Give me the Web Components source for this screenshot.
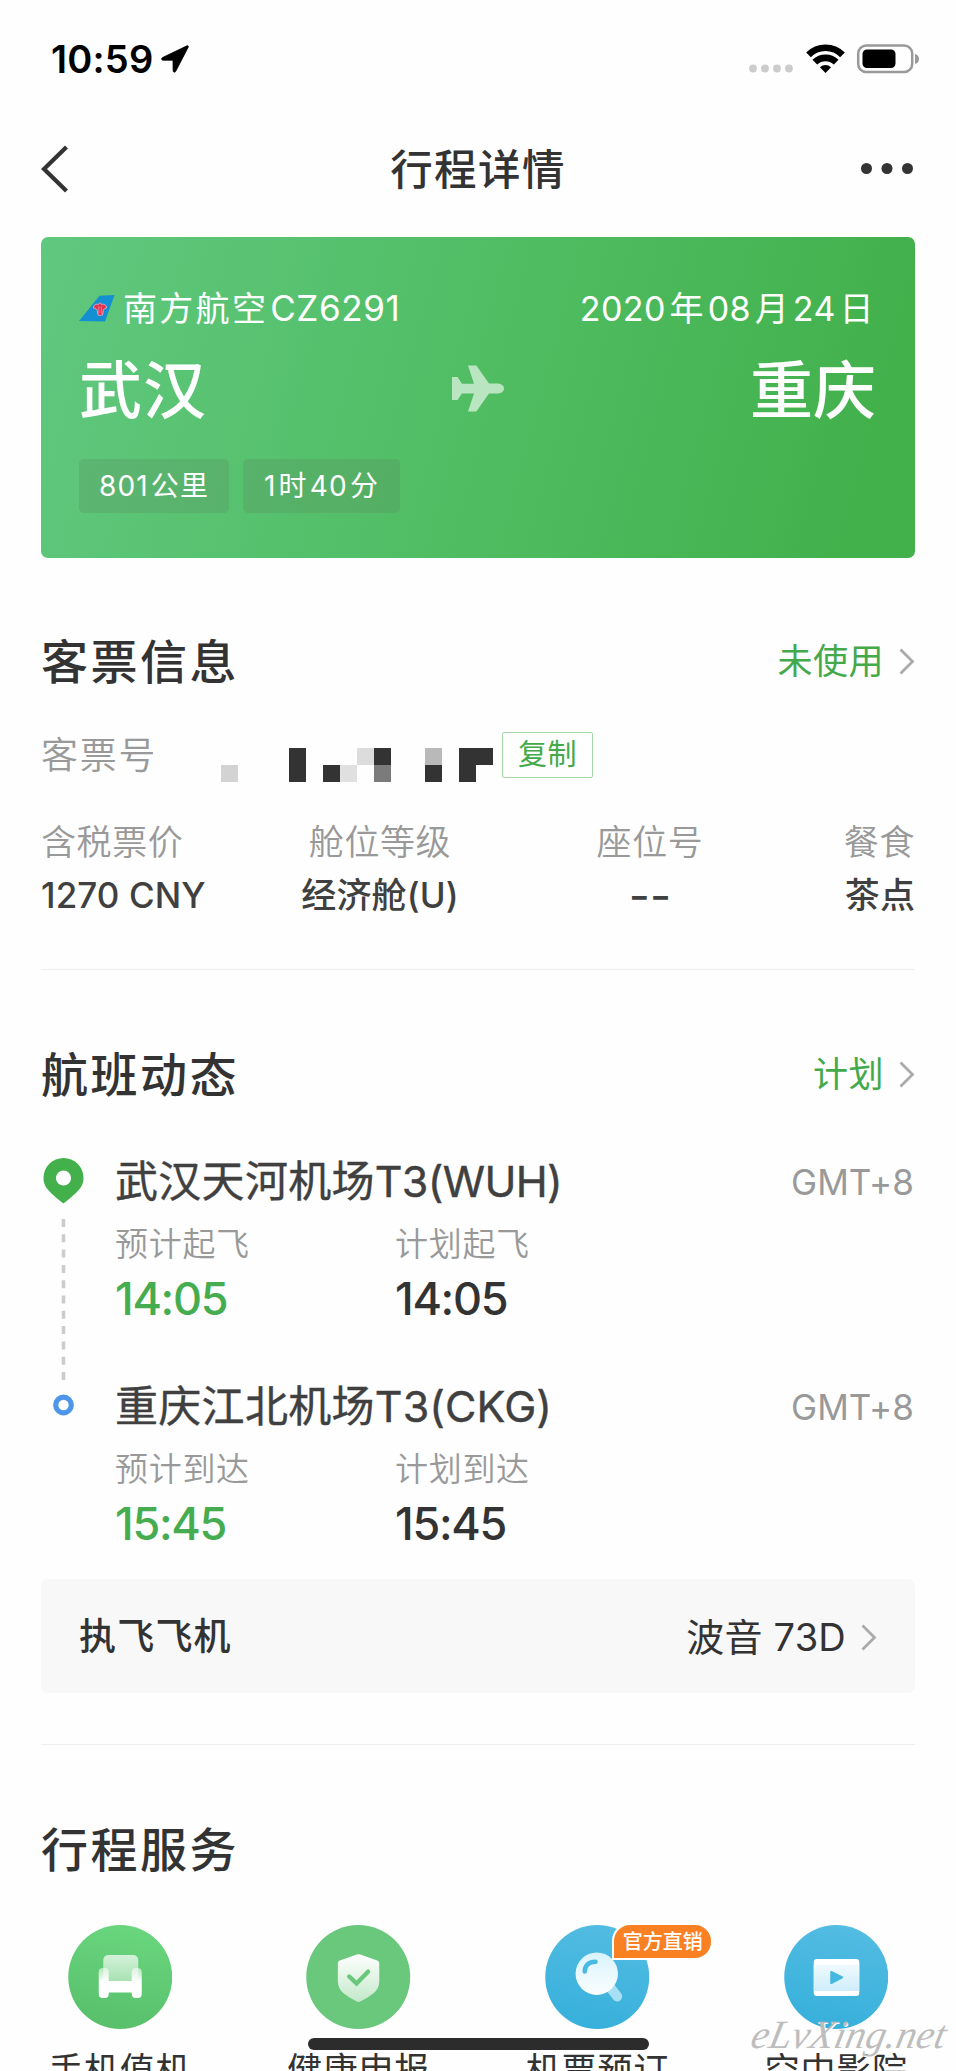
<!DOCTYPE html>
<html lang="zh-CN">
<head>
<meta charset="utf-8">
<title>行程详情</title>
<style>
  body {
    margin: 0;
    height: 2071px;
    overflow: hidden;
    background: #fefefe;
    color: #333;
    font-family: "Inter", "Noto Sans CJK SC", sans-serif;
  }
</style>
</head>
<body>
<trip-page></trip-page>

<script>
// crea el shadow root con estilos y contenido
function pintar(el, css, html) {
  el.attachShadow({ mode: 'open' }).innerHTML = `<style>${css}</style>${html}`;
}

const ICONS = {
  seat: `
    <defs>
      <linearGradient id="bg" x1="0.6" y1="0" x2="0.4" y2="1"><stop offset="0" stop-color="#69d67d"/><stop offset="1" stop-color="#58bf6b"/></linearGradient>
      <linearGradient id="a" x1="0" y1="0" x2="0" y2="1"><stop offset="0" stop-color="#fff" stop-opacity=".72"/><stop offset="1" stop-color="#fff" stop-opacity=".45"/></linearGradient>
      <linearGradient id="b" x1="0" y1="0" x2="0" y2="1"><stop offset="0" stop-color="#fff" stop-opacity=".5"/><stop offset=".45" stop-color="#fff"/></linearGradient>
    </defs>
    <circle cx="52" cy="52" r="52" fill="url(#bg)"/>
    <path d="M35 56V35a5 5 0 0 1 5-5h25a5 5 0 0 1 5 5v21z" fill="url(#a)"/>
    <path d="M30.500 47a4 4 0 0 1 4-4h2a4 4 0 0 1 4 4v9h23v-9a4 4 0 0 1 4-4h2a4 4 0 0 1 4 4v22a4 4 0 0 1-4 4h-2a4 4 0 0 1-4-4v-1.500h-23V69a4 4 0 0 1-4 4h-2a4 4 0 0 1-4-4z" fill="url(#b)"/>`,
  shield: `
    <defs><linearGradient id="s" x1="0" y1="0" x2="0" y2="1"><stop offset="0" stop-color="#fff"/><stop offset="1" stop-color="#fff" stop-opacity=".6"/></linearGradient></defs>
    <circle cx="52" cy="52" r="52" fill="#69c87b"/>
    <path d="M50.500 29.500q1.800-.7 3.600 0L71 35.500q2 .7 2 3V56q0 8-6 12.500-6.500 5-13 8-1.700.8-3.400 0-6.500-3-13-8-6-4.500-6-12.500V38.500q0-2.300 2-3z" fill="url(#s)"/>
    <path d="M43 51.500l7.300 7 11.500-11.800" fill="none" stroke="#69c87b" stroke-width="4.400" stroke-linecap="round"/>`,
  search: `
    <defs>
      <linearGradient id="bg" x1="0.6" y1="0" x2="0.4" y2="1"><stop offset="0" stop-color="#53bce2"/><stop offset="1" stop-color="#36b0db"/></linearGradient>
      <linearGradient id="m" x1="0" y1="0" x2="0" y2="1"><stop offset="0" stop-color="#d8f3fc"/><stop offset="1" stop-color="#fbfeff"/></linearGradient>
    </defs>
    <circle cx="52" cy="52" r="52" fill="url(#bg)"/>
    <path d="M65 62.500l7 9" stroke="#a5e0f5" stroke-width="10" stroke-linecap="round"/>
    <circle cx="51.500" cy="48.700" r="21.200" fill="url(#m)"/>
    <path d="M39.500 46.500c0-6 4-9.800 10.800-9.800" fill="none" stroke="#49b9e1" stroke-width="4.500" stroke-linecap="round"/>`,
  video: `
    <defs>
      <linearGradient id="bg" x1="0.6" y1="0" x2="0.4" y2="1"><stop offset="0" stop-color="#53bce2"/><stop offset="1" stop-color="#36b0db"/></linearGradient>
      <linearGradient id="v" x1="0" y1="0" x2="0" y2="1"><stop offset="0" stop-color="#f0faff"/><stop offset="1" stop-color="#ceedfa"/></linearGradient>
    </defs>
    <circle cx="52" cy="52" r="52" fill="url(#bg)"/>
    <rect x="29.500" y="34" width="45.500" height="37" rx="3" fill="#fff"/>
    <path d="M29.500 39.500H75V66H29.500z" fill="url(#v)"/>
    <path d="M47 47l11 5.300L47 58z" fill="#45b7e0" stroke="#45b7e0" stroke-width="2" stroke-linejoin="round"/>`
};

class StatusBar extends HTMLElement {
  constructor() {
    super();
    pintar(this, `
      :host { display: flex; align-items: center; height: 117px; padding: 0 37px 0 51px; color: #000; }
      .time { font-size: 38px; font-weight: 600; line-height: 40px; letter-spacing: .2px; }
      .arrow { margin-left: 8px; }
      .right { display: flex; align-items: center; margin-left: auto; }
      svg { display: block; }
    `, `
      <span class="time">10:59</span>
      <svg class="arrow" width="28" height="28" viewBox="0 0 28 28"><path d="M26 .8L1.500 12.600c-1.500.8-1.200 2.600.6 2.600H12l.1 10.200c0 2 2 2.400 2.800.6L27.200 2.200c.4-1.100-.2-1.800-1.200-1.400z" stroke="#000" stroke-width=".8"/></svg>
      <div class="right">
        <svg width="170" height="30" viewBox="0 0 170 30">
          <g fill="#ccc"><circle cx="4" cy="24.500" r="3.900"/><circle cx="16" cy="24.500" r="3.900"/><circle cx="28" cy="24.500" r="3.900"/><circle cx="40" cy="24.500" r="3.900"/></g>
          <g fill="none" stroke="#000" stroke-width="6.600">
            <path d="M59.500 10.800a24 24 0 0 1 34 0"/>
            <path d="M65.800 18.200a15.300 15.300 0 0 1 21.400 0"/>
          </g>
          <path d="M76.500 29l-5.600-5.700q5.600-4.600 11.200 0z"/>
          <rect x="109.200" y="1.500" width="54" height="26.500" rx="8" fill="none" stroke="#999" stroke-width="2.500"/>
          <rect x="113.500" y="5.500" width="33" height="18.500" rx="4.500"/>
          <path d="M166 10q4 1 4 5t-4 5z" fill="#999"/>
        </svg>
      </div>`);
  }
}
customElements.define('status-bar', StatusBar);

class NavBar extends HTMLElement {
  constructor() {
    super();
    pintar(this, `
      :host { display: grid; grid-template-columns: 60px 1fr 60px; align-items: center; height: 104px; padding: 0 41px; }
      h1 { margin: 2px 0 0; text-align: center; font-size: 42.500px; line-height: 60px; font-weight: 500; letter-spacing: 1.400px; }
      svg { display: block; }
      .more { justify-self: end; }
    `, `
      <svg width="30" height="48" viewBox="0 0 30 48"><path d="M25.500 2L3 24l22.500 22" fill="none" stroke="#333" stroke-width="4.200"/></svg>
      <h1><slot></slot></h1>
      <svg class="more" width="54" height="14" fill="#333"><circle cx="5.500" cy="6.500" r="5.500"/><circle cx="26" cy="6.500" r="5.500"/><circle cx="46.500" cy="6.500" r="5.500"/></svg>`);
  }
}
customElements.define('nav-bar', NavBar);

class FlightCard extends HTMLElement {
  constructor() {
    super();
    pintar(this, `
      :host {
        display: block; box-sizing: border-box; height: 321px; margin-top: 16px; padding: 46px 40px 0 38px;
        border-radius: 7px; color: #fff;
        background: linear-gradient(105deg, #60c87f 0%, #50bd63 50%, #42b14c 92%);
      }
      .row { display: flex; align-items: center; justify-content: space-between; }
      .top { height: 50px; font-size: 34px; line-height: 49px; letter-spacing: 2.300px; }
      .airline { display: flex; align-items: center; }
      .airline svg { margin-right: 8px; }
      .latin { font-size: 35px; letter-spacing: .6px; margin-left: 2px; }
      .date { letter-spacing: .5px; word-spacing: -6.500px; margin-right: 1px; }
      .cities { height: 90px; margin-top: 12px; font-size: 63px; line-height: 92px; font-weight: 500; }
      .cities span { width: 128px; }
      .cities span:first-child { letter-spacing: 1px; }
      .cities span:last-child { text-align: right; margin-right: -1px; }
      .cities svg { margin-top: -4px; }
      .tags { display: flex; gap: 14px; margin-top: 24px; }
      .tags span {
        box-sizing: border-box; height: 54px; line-height: 55px; text-align: center; border-radius: 5px;
        background: rgba(90, 130, 90, .25); font-size: 28px; letter-spacing: 1.100px; word-spacing: -6.800px;
      }
      .dist { width: 150px; }
      .dur { width: 157px; }
    `, `
      <div class="row top">
        <div class="airline">
          <svg width="36" height="27" viewBox="0 0 36 27">
            <path d="M0 26L20.500.8 35.500 0 26 26.500z" fill="#1290d2"/>
            <path d="M14.500 13c0-3 2.500-4.500 5-3.500.5-2 2.500-2 3 0 3-1 5 .8 5 3.500-2 .5-3 1-3.200 2.500L23.500 20q-2 1-4.500 0l-.8-4.500c-.3-1.500-1.700-2-3.700-2.500z" fill="#e2334f" stroke="#f2b6cb" stroke-width=".8"/>
            <path d="M19.800 11.500v7M22.400 11.500v7" stroke="#f2a5b5" stroke-width=".7"/>
          </svg>
          <span>南方航空</span><span class="latin">CZ6291</span>
        </div>
        <span class="date">2020 年 08 月 24 日</span>
      </div>
      <div class="row cities">
        <span>武汉</span>
        <svg width="52" height="47" viewBox="0 0 52 47"><path d="M0 12h5.500l4.500 6.800h12L16 0.500h8.300L37 18.500h9q6 .8 6 5t-6 5h-9L24.300 46.500H16l6-18H10L5.500 35H0z" fill="#fff" opacity=".6"/></svg>
        <span>重庆</span>
      </div>
      <div class="tags"><span class="dist">801 公里</span><span class="dur">1 时 40 分</span></div>`);
  }
}
customElements.define('flight-card', FlightCard);

const CHEVRON = `<svg width="16" height="27" viewBox="0 0 16 27"><path d="M1.500 1.500l12 12-12 12" fill="none" stroke="#aaa" stroke-width="2.800"/></svg>`;

class TripSection extends HTMLElement {
  constructor() {
    super();
    const estado = this.getAttribute('status');
    pintar(this, `
      :host { display: block; }
      .head { display: flex; box-sizing: border-box; align-items: center; justify-content: space-between; height: 60px; padding-top: 2px; }
      h2 { margin: 0; font-size: 47px; line-height: 59px; font-weight: 500; letter-spacing: 2.500px; }
      .status { display: flex; align-items: center; gap: 15px; color: #43a94b; font-size: 35px; line-height: 50px; letter-spacing: .5px; }
      svg { display: block; }
    `, `
      <div class="head"><h2>${this.getAttribute('title-text')}</h2>${estado ? `<div class="status">${estado}${CHEVRON}</div>` : ''}</div>
      <slot></slot>`);
  }
}
customElements.define('trip-section', TripSection);

class TicketInfo extends HTMLElement {
  constructor() {
    super();
    // bloques del numero oculto: [columna, fila, color]
    const bloques = [[0,1,'#d3d3d3'],[4,0,'#333'],[4,1,'#333'],[6,1,'#333'],[7,1,'#e0e0e0'],[8,0,'#dcdcdc'],[9,0,'#333'],[9,1,'#7b7b7b'],
      [12,0,'#b9b9b9'],[12,1,'#333'],[14,0,'#333'],[14,1,'#333'],[15,0,'#333']];
    pintar(this, `
      :host { display: block; margin-top: 42px; padding-bottom: 47px; border-bottom: 1px solid #eee; }
      .number { display: flex; align-items: center; height: 46px; }
      .label { width: 112px; overflow: hidden; white-space: nowrap; color: #999; font-size: 37px; line-height: 48px; padding-top: 1px; font-weight: 350; letter-spacing: 1.800px; }
      .mask { margin: 20px 9px 0 68px; }
      button {
        box-sizing: border-box; width: 91px; height: 46px; padding: 0; border: 1px solid #a6d8aa; border-radius: 2px;
        background: none; color: #43a94b; font: inherit; font-size: 29px; line-height: 44px; letter-spacing: .5px;
      }
      .grid { display: grid; grid-template-columns: 204px 270px 270px 130px; margin-top: 38px; line-height: 53px; font-size: 35px; text-align: center; }
      .grid div:first-child { text-align: left; }
      .grid div:last-child { text-align: right; }
      dt, dd, dl { margin: 0; }
      dt { color: #999; font-weight: 350; letter-spacing: .6px; }
      dd { height: 53px; font-weight: 500; color: #404040; letter-spacing: .1px; white-space: nowrap; }
      .empty { font-size: 46px; font-weight: 400; }
    `, `
      <div class="number">
        <span class="label">客票号</span>
        <svg class="mask" width="272" height="34" shape-rendering="crispEdges">${bloques.map(b => `<rect x="${b[0] * 17}" y="${b[1] * 17}" width="17" height="17" fill="${b[2]}"/>`).join('')}</svg>
        <button>复制</button>
      </div>
      <dl class="grid">
        <div><dt>含税票价</dt><dd>1270 CNY</dd></div>
        <div><dt>舱位等级</dt><dd>经济舱(U)</dd></div>
        <div><dt>座位号</dt><dd class="empty">--</dd></div>
        <div><dt>餐食</dt><dd>茶点</dd></div>
      </dl>`);
  }
}
customElements.define('ticket-info', TicketInfo);

class FlightRoute extends HTMLElement {
  constructor() {
    super();
    pintar(this, `
      :host { display: grid; grid-template-columns: 74px 1fr; margin-top: 47px; }
      .rail { display: block; margin-top: 8px; }
      .legs { display: flex; flex-direction: column; gap: 48px; }
    `, `
      <svg class="rail" width="46" height="260" viewBox="0 0 46 260">
        <path d="M22.500 0a20 20 0 0 1 20 20c0 8-4 13-20 25.500C6.500 33 2.500 28 2.500 20a20 20 0 0 1 20-20z" fill="#43b04c"/>
        <circle cx="22.500" cy="20" r="7.600" fill="#fff"/>
        <path d="M22.500 61v162" stroke="#ccc" stroke-width="3.500" stroke-dasharray="8 7.300"/>
        <circle cx="22.500" cy="247" r="7.800" fill="#fff" stroke="#4e96e9" stroke-width="5.200"/>
      </svg>
      <div class="legs"><slot></slot></div>`);
  }
}
customElements.define('flight-route', FlightRoute);

class RouteLeg extends HTMLElement {
  constructor() {
    super();
    const tipo = this.getAttribute('kind');
    const hora = this.getAttribute('time');
    pintar(this, `
      :host { display: block; height: 177px; }
      .name { display: flex; justify-content: space-between; height: 60px; font-size: 43px; line-height: 62px; color: #404040; }
      .name b { font-weight: 400; letter-spacing: .3px; -webkit-text-stroke: .4px #404040; }
      .code { letter-spacing: var(--code-spacing, 0); }
      .zone { font-size: 35px; line-height: 64px; color: #999; letter-spacing: .1px; margin-right: 1px; }
      .times { display: grid; grid-template-columns: 280px 1fr; margin-top: 10px; }
      .times span { color: #999; font-size: 33px; line-height: 48px; font-weight: 350; letter-spacing: .7px; }
      .times strong { margin-top: 3px; font-size: 45px; line-height: 56px; font-weight: 500; letter-spacing: -1.300px; }
      .est { color: #46ac50; }
    `, `
      <div class="name"><b>${this.getAttribute('airport')}<span class="code">${this.getAttribute('code')}</span></b><span class="zone">GMT+8</span></div>
      <div class="times">
        <span>预计${tipo}</span><span>计划${tipo}</span>
        <strong class="est">${hora}</strong><strong>${hora}</strong>
      </div>`);
  }
}
customElements.define('route-leg', RouteLeg);

class PlaneRow extends HTMLElement {
  constructor() {
    super();
    pintar(this, `
      :host { display: block; margin-top: 27px; padding-bottom: 51px; border-bottom: 1px solid #eee; }
      .box { display: flex; box-sizing: border-box; align-items: center; height: 114px; padding: 2px 38px 0 38px; border-radius: 7px; background: #f8f8f9; font-size: 37px; line-height: 60px; }
      strong { font-weight: 500; letter-spacing: 1.200px; }
      .model { margin-left: auto; margin-right: 15px; font-size: 38px; letter-spacing: .2px; }
      svg { display: block; }
    `, `<div class="box"><strong>执飞飞机</strong><span class="model">波音 73D</span>${CHEVRON}</div>`);
  }
}
customElements.define('plane-row', PlaneRow);

class ServiceItem extends HTMLElement {
  constructor() {
    super();
    const badge = this.getAttribute('badge');
    pintar(this, `
      :host { display: flex; flex-direction: column; align-items: center; position: relative; width: 157.500px; }
      svg { display: block; }
      .name { margin-top: 16px; font-size: 35px; line-height: 50px; letter-spacing: .8px; white-space: nowrap; }
      .badge {
        position: absolute; left: 93px; top: -2px; height: 33px; padding: 0 8px 0 9px; border: 2px solid #fff;
        border-radius: 18px 18px 18px 0; background: #fa8024; color: #fff; font-size: 20px; line-height: 34px; font-weight: 500; white-space: nowrap;
      }
    `, `
      <svg width="104.500" height="104" viewBox="0 0 104 104">${ICONS[this.getAttribute('icon')]}</svg>
      <span class="name"><slot></slot></span>
      ${badge ? `<span class="badge">${badge}</span>` : ''}`);
  }
}
customElements.define('service-item', ServiceItem);

class TripPage extends HTMLElement {
  constructor() {
    super();
    pintar(this, `
      :host { display: block; position: relative; height: 2071px; overflow: hidden; }
      main { padding: 0 41px; }
      .first { margin-top: 72px; }
      .next { margin-top: 73px; }
      .wuh { --code-spacing: -.7px; }
      .ckg { --code-spacing: .1px; }
      .services { display: flex; justify-content: space-between; margin-top: 47px; }
      .home { position: absolute; left: 308px; top: 2038px; width: 341px; height: 12px; border-radius: 6px; background: #2c2c2d; }
      .mark {
        position: absolute; left: 752px; top: 2010px; color: #bdbdbd; font: italic 40px/50px "Liberation Serif", serif;
        letter-spacing: .2px; text-shadow: 1px 1px 0 #fff; white-space: nowrap; transform: skewX(-12deg);
      }
    `, `
      <status-bar></status-bar>
      <nav-bar>行程详情</nav-bar>
      <main>
        <flight-card></flight-card>
        <trip-section class="first" title-text="客票信息" status="未使用"><ticket-info></ticket-info></trip-section>
        <trip-section class="next" title-text="航班动态" status="计划">
          <flight-route>
            <route-leg class="wuh" airport="武汉天河机场" code="T3(WUH)" kind="起飞" time="14:05"></route-leg>
            <route-leg class="ckg" airport="重庆江北机场" code="T3(CKG)" kind="到达" time="15:45"></route-leg>
          </flight-route>
          <plane-row></plane-row>
        </trip-section>
        <trip-section class="next" title-text="行程服务">
          <div class="services">
            <service-item icon="seat">手机值机</service-item>
            <service-item icon="shield">健康申报</service-item>
            <service-item icon="search" badge="官方直销">机票预订</service-item>
            <service-item icon="video">空中影院</service-item>
          </div>
        </trip-section>
      </main>
      <div class="home"></div>
      <div class="mark">eLvXing.net</div>`);
  }
}
customElements.define('trip-page', TripPage);
</script>
</body>
</html>
